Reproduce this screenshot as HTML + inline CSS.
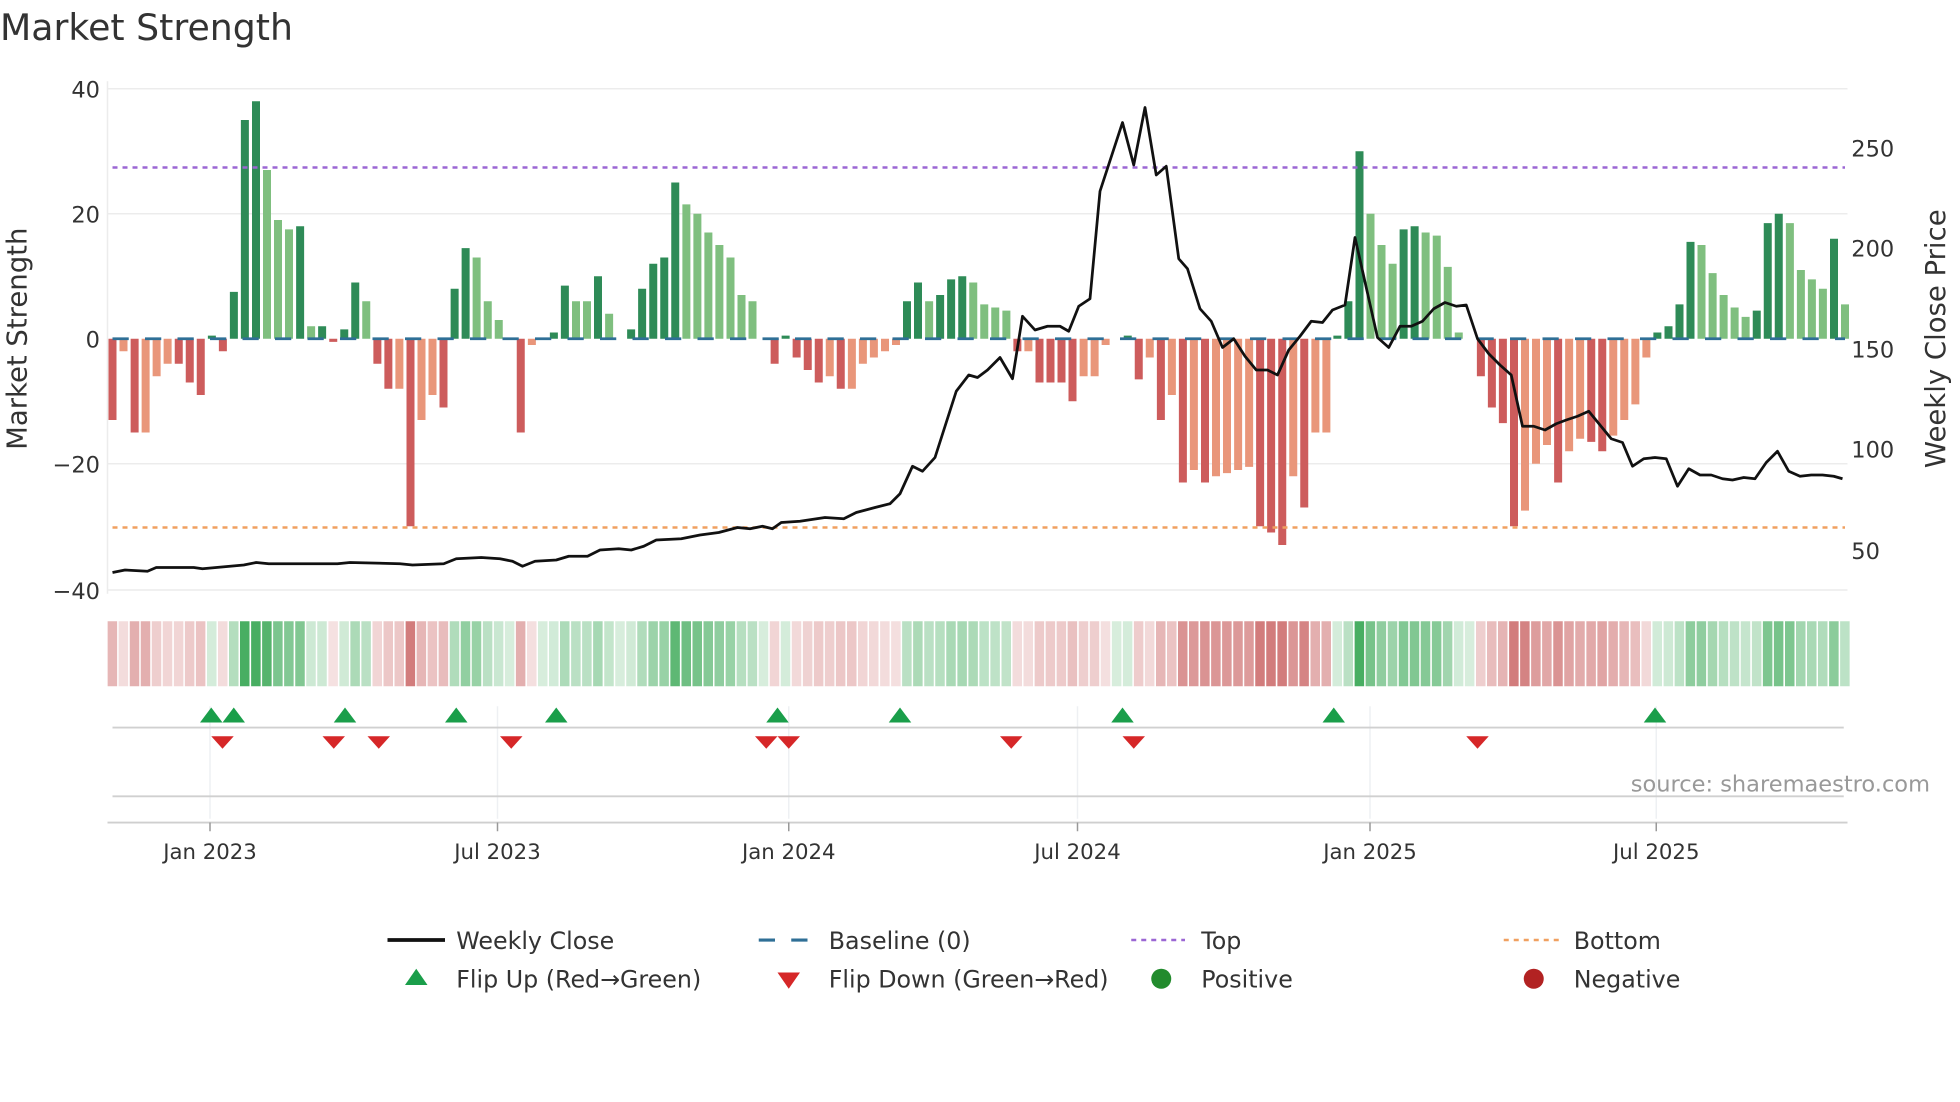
<!DOCTYPE html>
<html><head><meta charset="utf-8">
<style>
html,body{margin:0;padding:0;background:#fff;}
svg{display:block;font-family:"DejaVu Sans","Liberation Sans",sans-serif;}
</style></head>
<body>
<svg id="c" width="1960" height="1102" viewBox="0 0 1568 881.6" xmlns="http://www.w3.org/2000/svg">
<rect width="1568" height="882" fill="#fff"/>
<text x="0" y="32" font-size="29" fill="#333">Market Strength</text>
<g stroke="#ececec" stroke-width="1.2">
<line x1="86" x2="1478" y1="71" y2="71"/><line x1="86" x2="1478" y1="171" y2="171"/>
<line x1="86" x2="1478" y1="371" y2="371"/><line x1="86" x2="1478" y1="472" y2="472"/>
<line x1="86" x2="86" y1="65" y2="475"/>
</g>
<g font-size="18" fill="#333" text-anchor="end">
<text x="80" y="78">40</text><text x="80" y="178">20</text><text x="80" y="278">0</text>
<text x="80" y="378">−20</text><text x="80" y="479">−40</text>
</g>
<g font-size="18" fill="#333">
<text x="1481" y="125">250</text><text x="1481" y="205">200</text><text x="1481" y="286">150</text>
<text x="1481" y="366">100</text><text x="1481" y="447">50</text>
</g>
<text transform="translate(21,271) rotate(-90)" font-size="22" fill="#333" text-anchor="middle">Market Strength</text>
<text transform="translate(1556,271) rotate(-90)" font-size="22" fill="#333" text-anchor="middle">Weekly Close Price</text>
<g id="bars"></g>
<line x1="90" x2="1476" y1="271" y2="271" stroke="#2f6f96" stroke-width="2.2" stroke-dasharray="13,13"/>
<line x1="90" x2="1476" y1="134" y2="134" stroke="#9b66d4" stroke-width="2" stroke-dasharray="4,4"/>
<line x1="90" x2="1476" y1="422" y2="422" stroke="#f0a060" stroke-width="2" stroke-dasharray="4,4"/>
<polyline id="price" fill="none" stroke="#111" stroke-width="2.2" stroke-linejoin="round"/>
<g id="strip"></g>
<g stroke="#eef0f3" stroke-width="1.2">
<line x1="168" x2="168" y1="565" y2="655"/><line x1="398" x2="398" y1="565" y2="655"/>
<line x1="631" x2="631" y1="565" y2="655"/><line x1="862" x2="862" y1="565" y2="655"/>
<line x1="1096" x2="1096" y1="565" y2="655"/><line x1="1325" x2="1325" y1="565" y2="655"/>
</g>
<line x1="90" x2="1475" y1="582" y2="582" stroke="#d0d0d0" stroke-width="1.5"/>
<line x1="90" x2="1475" y1="637" y2="637" stroke="#d0d0d0" stroke-width="1.5"/>
<line x1="86" x2="1478" y1="658" y2="658" stroke="#cfcfcf" stroke-width="1.5"/>
<g id="marks"></g>
<g stroke="#999" stroke-width="1.2">
<line x1="168" x2="168" y1="658" y2="665"/><line x1="398" x2="398" y1="658" y2="665"/>
<line x1="631" x2="631" y1="658" y2="665"/><line x1="862" x2="862" y1="658" y2="665"/>
<line x1="1096" x2="1096" y1="658" y2="665"/><line x1="1325" x2="1325" y1="658" y2="665"/>
</g>
<g font-size="17" fill="#333" text-anchor="middle">
<text x="168" y="687">Jan 2023</text><text x="398" y="687">Jul 2023</text>
<text x="631" y="687">Jan 2024</text><text x="862" y="687">Jul 2024</text>
<text x="1096" y="687">Jan 2025</text><text x="1325" y="687">Jul 2025</text>
</g>
<text x="1544" y="633" font-size="18" fill="#999" text-anchor="end">source: sharemaestro.com</text>
<g font-size="19" fill="#333">
<line x1="310" x2="356" y1="752" y2="752" stroke="#111" stroke-width="3"/>
<text x="365" y="759">Weekly Close</text>
<line x1="607" x2="652" y1="752" y2="752" stroke="#2f6f96" stroke-width="2.5" stroke-dasharray="13,13"/>
<text x="663" y="759">Baseline (0)</text>
<line x1="905" x2="948" y1="752" y2="752" stroke="#9b66d4" stroke-width="2" stroke-dasharray="4,4"/>
<text x="961" y="759">Top</text>
<line x1="1203" x2="1247" y1="752" y2="752" stroke="#f0a060" stroke-width="2" stroke-dasharray="4,4"/>
<text x="1259" y="759">Bottom</text>
<polygon points="324,788 342,788 333,775" fill="#1a9e4a"/>
<text x="365" y="790">Flip Up (Red→Green)</text>
<polygon points="622,778 640,778 631,791" fill="#d62728"/>
<text x="663" y="790">Flip Down (Green→Red)</text>
<circle cx="929" cy="783" r="8" fill="#228b2d"/>
<text x="961" y="790">Positive</text>
<circle cx="1227" cy="783" r="8" fill="#b22222"/>
<text x="1259" y="790">Negative</text>
</g>
</svg>
<script>
var NS="http://www.w3.org/2000/svg";
function el(t,a,p){var e=document.createElementNS(NS,t);for(var k in a)e.setAttribute(k,a[k]);p.appendChild(e);return e;}
var B=[[-13,1],[-2,0],[-15,1],[-15,0],[-6,0],[-4,0],[-4,1],[-7,1],[-9,1],[0.5,1],[-2,1],[7.5,1],[35,1],[38,1],[27,0],[19,0],[17.5,0],[18,1],[2,0],[2,1],[-0.5,1],[1.5,1],[9,1],[6,0],[-4,1],[-8,1],[-8,0],[-30,1],[-13,0],[-9,0],[-11,1],[8,1],[14.5,1],[13,0],[6,0],[3,0],[0,0],[-15,1],[-1,0],[0,0],[1,1],[8.5,1],[6,0],[6,0],[10,1],[4,0],[0,0],[1.5,1],[8,1],[12,1],[13,1],[25,1],[21.5,0],[20,0],[17,0],[15,0],[13,0],[7,0],[6,0],[0,0],[-4,1],[0.5,1],[-3,1],[-5,1],[-7,1],[-6,0],[-8,1],[-8,0],[-4,0],[-3,0],[-2,0],[-1,0],[6,1],[9,1],[6,0],[7,1],[9.5,1],[10,1],[9,0],[5.5,0],[5,0],[4.5,0],[-2,1],[-2,0],[-7,1],[-7,1],[-7,1],[-10,1],[-6,0],[-6,0],[-1,0],[0,0],[0.5,1],[-6.5,1],[-3,0],[-13,1],[-9,0],[-23,1],[-21,0],[-23,1],[-22,0],[-21.5,0],[-21,0],[-20.5,0],[-30,1],[-31,1],[-33,1],[-22,0],[-27,1],[-15,0],[-15,0],[0.5,1],[6,1],[30,1],[20,0],[15,0],[12,0],[17.5,1],[18,1],[17,0],[16.5,0],[11.5,0],[1,0],[0,0],[-6,1],[-11,1],[-13.5,1],[-30,1],[-27.5,0],[-20,0],[-17,0],[-23,1],[-18,0],[-16,0],[-16.5,1],[-18,1],[-15.5,0],[-13,0],[-10.5,0],[-3,0],[1,1],[2,1],[5.5,1],[15.5,1],[15,0],[10.5,0],[7,0],[5,0],[3.5,0],[4.5,1],[18.5,1],[20,1],[18.5,0],[11,0],[9.5,0],[8,0],[16,1],[5.5,0]];
var n=B.length, x0=90, dx=(1476-90)/(n-1);
var bars=document.getElementById('bars'), strip=document.getElementById('strip');
for(var i=0;i<n;i++){
 var v=B[i][0],d=B[i][1],x=x0+i*dx, col;
 if(v>=0) col=d?'#2e8b57':'#7fbf7f'; else col=d?'#cd5c5c':'#e9967a';
 var h=Math.abs(v)*5; if(h<1&&v!=0)h=2;
 if(v!=0) el('rect',{x:(x-3.2).toFixed(1),y:(v>=0?271-h:271).toFixed(1),width:6.4,height:h.toFixed(1),fill:col},bars);
 var a=Math.min(1,0.22+Math.abs(v)/38);
 var sc=v>=0?'rgba(40,160,70,'+(a*0.85).toFixed(2)+')':'rgba(195,80,80,'+(a*0.75).toFixed(2)+')';
 el('rect',{x:(x-3.9).toFixed(1),y:497,width:7.6,height:52,fill:sc},strip);
}
var P=[[90,458],[100,456],[118,457],[125,454],[155,454],[162,455],[195,452],[205,450],[215,451],[270,451],[280,450],[320,451],[330,452],[355,451],[365,447],[385,446],[400,447],[410,449],[418,453],[428,449],[445,448],[455,445],[470,445],[480,440],[495,439],[505,440],[515,437],[525,432],[545,431],[560,428],[575,426],[590,422],[600,423],[610,421],[618,423],[625,418],[640,417],[660,414],[675,415],[685,410],[700,406],[712,403],[720,395],[730,373],[738,377],[748,366],[765,313],[775,300],[782,302],[790,296],[800,286],[810,303],[818,253],[828,264],[838,261],[848,261],[855,265],[863,245],[872,239],[880,153],[898,98],[907,132],[916,86],[925,140],[933,133],[943,207],[950,215],[960,247],[969,257],[978,278],[987,271],[996,285],[1005,296],[1014,296],[1022,300],[1031,280],[1040,269],[1049,257],[1058,258],[1066,248],[1076,244],[1084,190],[1093,230],[1102,270],[1111,278],[1120,261],[1129,261],[1138,257],[1147,247],[1156,242],[1165,245],[1173,244],[1182,271],[1191,283],[1200,292],[1209,300],[1218,341],[1227,341],[1236,344],[1245,339],[1253,336],[1262,333],[1271,329],[1280,340],[1289,351],[1298,354],[1306,373],[1315,367],[1324,366],[1333,367],[1342,389],[1351,375],[1360,380],[1369,380],[1378,383],[1386,384],[1395,382],[1404,383],[1413,370],[1422,361],[1431,377],[1440,381],[1449,380],[1458,380],[1467,381],[1474,383]];
document.getElementById('price').setAttribute('points',P.map(function(p){return p.join(',')}).join(' '));
var marks=document.getElementById('marks');
[169,187,276,365,445,622,720,898,1067,1324].forEach(function(x){el('polygon',{points:(x-9)+',578 '+(x+9)+',578 '+x+',566',fill:'#1a9e4a'},marks);});
[178,267,303,409,613,631,809,907,1182].forEach(function(x){el('polygon',{points:(x-9)+',589 '+(x+9)+',589 '+x+',599',fill:'#d62728'},marks);});
</script>
</body></html>
